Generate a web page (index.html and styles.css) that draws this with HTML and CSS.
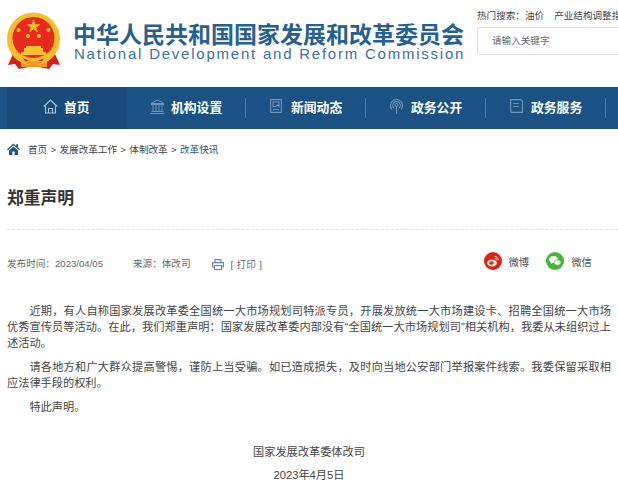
FILE: index.html
```html
<!DOCTYPE html>
<html lang="zh-CN">
<head>
<meta charset="utf-8">
<title>郑重声明</title>
<link rel="stylesheet" href="styles.css">
</head>
<body>
<header class="header">
  <svg class="emblem" width="54" height="58" viewBox="0 0 54 58">
    <path d="M6 42 L1 53 L8 52 L12 57 L22 55 L32 55 L42 57 L46 52 L53 53 L48 42Z" fill="#d42020"/>
    <circle cx="26.5" cy="27" r="26.5" fill="#f7bd2d"/>
    <circle cx="26.5" cy="26" r="21" fill="#e8291f"/>
    <path d="M26.5 7l1.7 5.2h5.4l-4.4 3.2 1.7 5.1-4.4-3.2-4.4 3.2 1.7-5.1-4.4-3.2h5.4z" fill="#f9c22e"/>
    <circle cx="11.5" cy="18" r="2" fill="#f9c22e"/>
    <circle cx="41.5" cy="18" r="2" fill="#f9c22e"/>
    <circle cx="21" cy="24" r="2" fill="#f9c22e"/>
    <circle cx="32" cy="24" r="2" fill="#f9c22e"/>
    <path d="M19 34h15v2h2v4h3v3H14v-3h3v-4h2z" fill="#f9c22e"/>
    <path d="M8 38 Q26 54 45 38 L47 44 Q38 52 33 50 L26.5 54 L20 50 Q15 52 6 44Z" fill="#f7bd2d"/>
    <path d="M16 46 Q26.500 53 37 46 L34 51 L26.500 55 L19 51Z" fill="#d42020"/>
    <rect x="14" y="49" width="26" height="6" fill="#f6c02f" opacity=".75"/>
  </svg>
  <div class="brand">
    <div class="brand-cn">中华人民共和国国家发展和改革委员会</div>
    <div class="brand-en">National Development and Reform Commission</div>
  </div>
  <div class="search">
    <div class="hot">热门搜索：油价<span class="hot-item">产业结构调整指导目录</span></div>
    <div class="search-box">请输入关键字</div>
  </div>
</header>

<nav class="nav">
  <a class="tab active">
    <span class="icon-box"><svg width="15" height="15" viewBox="0 0 15 15" fill="none" stroke="#a9c3da" stroke-width="1.100"><path d="M.7 7.500 7.500 1l6.800 6.500"/><path d="M2.500 6.500V14h10V6.500"/><path d="M5.500 14V9.500h4V14"/></svg></span>
    首页
  </a>
  <a class="tab">
    <span class="icon-box"><svg width="15" height="15" viewBox="0 0 15 15" fill="none" stroke="#6f95b8" stroke-width="1"><path d="M1 4.500 7.500 1 14 4.500Z"/><path d="M1 5.500h13M3 6v6M6 6v6M9 6v6M12 6v6M1.500 12.500h12M.5 14.500h14"/></svg></span>
    机构设置
  </a>
  <a class="tab">
    <span class="icon-box"><svg width="12" height="14" viewBox="0 0 12 14" fill="none" stroke="#6f95b8" stroke-width="1.100"><path d="M.6.600h10.800v12.800H.6z"/><path d="M3 3h6v4.500L7.500 6 6 7.500H3z"/><path d="M3 10.500h6"/></svg></span>
    新闻动态
  </a>
  <a class="tab">
    <span class="icon-box"><svg width="13" height="15" viewBox="0 0 13 15" fill="none" stroke="#6f95b8" stroke-width="1.100"><path d="M2 10.500a6 6 0 1 1 9 0"/><path d="M3.800 9a3.800 3.800 0 1 1 5.400 0"/><circle cx="6.500" cy="6" r="1.500"/><path d="M6.500 8v7"/></svg></span>
    政务公开
  </a>
  <a class="tab">
    <span class="icon-box"><svg width="13" height="14" viewBox="0 0 13 14" fill="none" stroke="#6f95b8" stroke-width="1.200"><path d="M.6.600h10l1.800 1.500v11.300H2a1.400 1.400 0 0 1-1.400-1.400z"/><path d="M3.500 4.500h5M3.500 7.500h5"/></svg></span>
    政务服务
  </a>
</nav>

<main class="main">
  <div class="crumbs">
    <svg class="crumb-home" width="13" height="12" viewBox="0 0 13 12"><path d="M6.500.5 0 6.300l.8.900L6.500 2.300l5.700 4.900.8-.9-2-1.800V1.200H9.200v1.700zM2 7.500V12h3.300V8.500h2.400V12H11V7.500L6.500 3.500z" fill="#1c5585"/></svg>
    <span class="crumb-text">首页 &gt; 发展改革工作 &gt; 体制改革 &gt; <b class="crumb-now">改革快讯</b></span>
  </div>

  <h1 class="title">郑重声明</h1>

  <div class="meta">
    <div class="meta-left">
      <span class="date">发布时间：2023/04/05</span>
      <span class="source">来源：体改司</span>
      <svg class="print-icon" width="12" height="11" viewBox="0 0 12 11" fill="none" stroke="#5d83a8" stroke-width="1.100"><path d="M3 3.500V.6h6v2.900"/><path d="M2.500 8H.6V3.600h10.800V8H9.500"/><path d="M2.500 6.500h7v4h-7z" /></svg>
      <span class="print">[ 打印 ]</span>
    </div>
    <div class="share">
      <svg class="share-icon" width="18" height="18" viewBox="0 0 18 18"><circle cx="9" cy="9" r="9" fill="#dc2414"/><ellipse cx="8" cy="11" rx="5" ry="3.500" fill="#f7e4dc"/><ellipse cx="7.500" cy="11" rx="2.300" ry="1.700" fill="#c9331f"/><path d="M10.500 4.500a3.500 3.500 0 0 1 3.800 3.800M10.800 6.300a1.800 1.800 0 0 1 1.800 1.800" fill="none" stroke="#f7e4dc" stroke-width="1"/></svg>
      <span class="share-label">微博</span>
      <svg class="share-icon wechat" width="18" height="18" viewBox="0 0 18 18"><circle cx="9" cy="9" r="9" fill="#43b637"/><ellipse cx="7.500" cy="7.500" rx="4.300" ry="3.500" fill="#fff"/><path d="M5.500 10l-.7 2 2.200-1.300z" fill="#fff"/><ellipse cx="11.500" cy="10.500" rx="3.500" ry="2.800" fill="#fff" stroke="#43b637" stroke-width=".7"/></svg>
      <span class="share-label">微信</span>
    </div>
  </div>

  <article class="content">
    <p class="para">近期，有人自称国家发展改革委全国统一大市场规划司特派专员，开展发放统一大市场建设卡、招聘全国统一大市场优秀宣传员等活动。在此，我们郑重声明：国家发展改革委内部没有“全国统一大市场规划司”相关机构，我委从未组织过上述活动。</p>
    <p class="para">请各地方和广大群众提高警惕，谨防上当受骗。如已造成损失，及时向当地公安部门举报案件线索。我委保留采取相应法律手段的权利。</p>
    <p class="para">特此声明。</p>
    <p class="sign first">国家发展改革委体改司</p>
    <p class="sign">2023年4月5日</p>
  </article>
</main>
</body>
</html>
```

FILE: styles.css
```css
* { box-sizing: border-box; }
html, body { margin: 0; padding: 0; }
body {
  width: 618px;
  height: 498px;
  overflow: hidden;
  background: #fff;
  color: #333;
  font-family: "Liberation Sans", "Noto Sans CJK SC", sans-serif;
  font-size: 9.6px;
}

.header { height: 87px; display: flex; white-space: nowrap; }
.emblem { margin: 12px 0 0 7px; flex: none; }
.brand { margin: 21px 0 0 12px; width: 404px; flex: none; color: #27608f; }
.brand-cn { font-family: "Noto Sans CJK SC", sans-serif; font-size: 23px; line-height: 25px; font-weight: 700; }
.brand-en { font-size: 15px; line-height: 15px; letter-spacing: 1.770px; padding-left: 1px; color: #3a6f9c; }
.search { flex: none; width: 141px; overflow: hidden; padding-top: 10px; }
.hot { line-height: 12px; color: #444; }
.hot-item { margin-left: 10px; }
.search-box { margin-top: 5px; width: 200px; height: 28px; border: 1px solid #ddd; border-radius: 3px; padding-left: 14px; line-height: 26px; color: #666; }

.nav { height: 42px; background: #1b5283; padding-left: 7px; display: flex; white-space: nowrap; }
.tab { flex: none; width: 120px; display: flex; align-items: center; padding: 0 0 4px 24px; color: #fff; font-size: 12.800px; font-weight: 700; position: relative; font-family: "Noto Sans CJK SC", sans-serif; }
.tab:not(.active)::after { content: ""; position: absolute; right: 0; top: 11px; height: 20px; width: 1px; background: #4f7fa8; }
.tab.active { background: #194a7a; width: 119px; padding-left: 36px; }
.icon-box { flex: none; width: 21px; display: flex; align-items: center; }

.main { padding: 0 7px; }
.crumbs { display: flex; align-items: center; gap: 8px; margin-top: 13px; height: 14px; color: #444; white-space: nowrap; }
.crumb-text { word-spacing: .670px; }
.crumb-now { font-weight: 400; color: #1b5283; }
.title { margin: 29px 0 0; font-size: 16.800px; line-height: 24px; font-weight: 700; color: #333; font-family: "Noto Sans CJK SC", sans-serif; padding-bottom: 20px; border-bottom: 1px dashed #e0e0e0; width: 611px; }
.meta { display: flex; justify-content: space-between; margin-top: 21px; height: 24px; color: #666; }
.meta-left { display: flex; align-items: center; height: 24px; }
.source { margin-left: 30px; }
.print-icon { margin: 3px 7px 0 21px; }
.print { margin-top: 1px; letter-spacing: .3px; }
.share { display: flex; align-items: center; margin-top: -4px; margin-right: 19px; }
.share-icon { flex: none; margin-right: 6px; }
.share-icon.wechat { margin-left: 17px; margin-right: 7px; }
.share-label { color: #555; font-size: 10.400px; }

.content { margin-top: 28px; font-size: 11.200px; line-height: 16px; color: #444; }
.para { margin: 0 0 8px; text-indent: 2em; text-align: justify; }
.sign { margin: 0; text-align: center; line-height: 16px; padding-top: 7px; }
.sign.first { padding-top: 21px; }
```
